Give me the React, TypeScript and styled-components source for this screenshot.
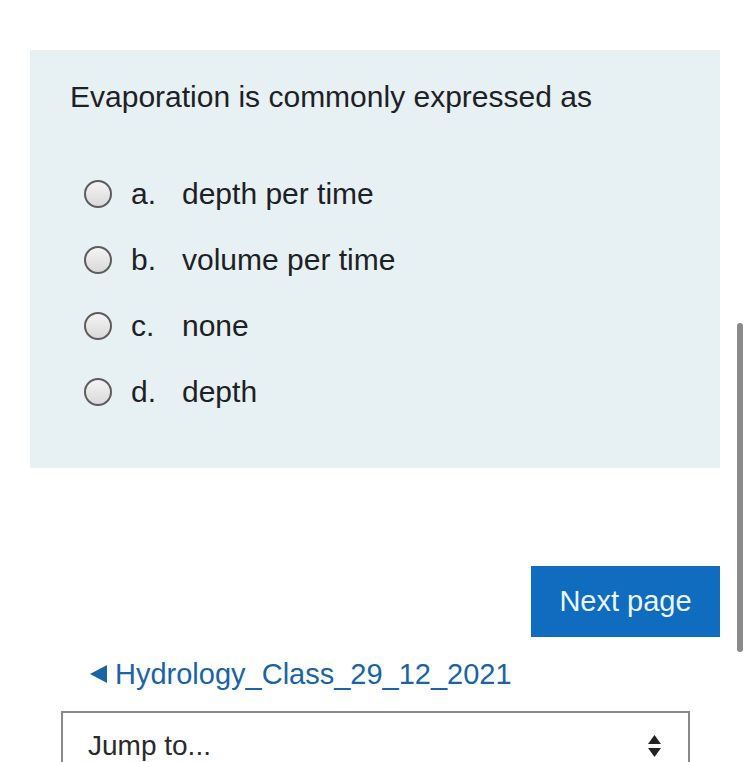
import styled, { createGlobalStyle } from "styled-components";

const GlobalStyle = createGlobalStyle`
  html, body {
    margin: 0;
    padding: 0;
    background: #fff;
    font-family: "Liberation Sans", Arial, sans-serif;
    color: #1d2125;
  }
`;

const Page = styled.div`
  position: relative;
  width: 750px;
  height: 762px;
  overflow: hidden;
  padding: 50px 0 0 30px;
  box-sizing: border-box;
`;

const QuestionPanel = styled.div`
  width: 690px;
  height: 418px;
  box-sizing: border-box;
  background: #e7f1f4;
  padding: 28px 40px 0 40px;
`;

const QuestionText = styled.div`
  font-size: 30px;
  line-height: 38px;
  color: #1d2125;
`;

const Answers = styled.div`
  display: flex;
  flex-direction: column;
  gap: 28px;
  margin-top: 59px;
  padding-left: 14px;
`;

const AnswerRow = styled.label`
  display: flex;
  align-items: center;
  height: 38px;
  font-size: 30px;
  color: #1d2125;
`;

const Radio = styled.span`
  width: 28px;
  height: 28px;
  border-radius: 50%;
  box-sizing: border-box;
  border: 2px solid #5c5c5c;
  background: linear-gradient(#f4f4f4, #d9d9d9);
  flex-shrink: 0;
`;

const Letter = styled.span`
  width: 51px;
  margin-left: 19px;
`;

const Footer = styled.div`
  display: flex;
  flex-direction: column;
  width: 690px;
`;

const NextButton = styled.button`
  align-self: flex-end;
  margin-top: 98px;
  width: 189px;
  height: 71px;
  border: none;
  background: #0f6cbf;
  color: #eaf6ff;
  font-family: inherit;
  font-size: 29px;
`;

const PrevLink = styled.a`
  display: flex;
  align-items: center;
  gap: 8px;
  margin: 21px 0 0 60px;
  font-size: 29px;
  line-height: 32px;
  color: #1a64a6;
  text-decoration: none;
`;

const Triangle = styled.span`
  width: 0;
  height: 0;
  border-top: 9px solid transparent;
  border-bottom: 9px solid transparent;
  border-right: 17px solid #1a64a6;
`;

const JumpSelect = styled.div`
  display: flex;
  align-items: center;
  justify-content: space-between;
  margin: 21px 0 0 31px;
  width: 629px;
  height: 72px;
  box-sizing: border-box;
  border: 2px solid #8a8a8a;
  border-bottom: none;
  padding: 0 26px 4px 25px;
  font-size: 28px;
  line-height: 30px;
  color: #2a2a2a;
`;

const Arrows = styled.svg`
  width: 15px;
  height: 24px;
`;

const Scrollbar = styled.div`
  position: absolute;
  left: 737px;
  top: 323px;
  width: 6px;
  height: 329px;
  border-radius: 3px;
  background: #8a8a8a;
`;

const answers = [
  { letter: "a.", text: "depth per time" },
  { letter: "b.", text: "volume per time" },
  { letter: "c.", text: "none" },
  { letter: "d.", text: "depth" },
];

export default function App() {
  return (
    <>
      <GlobalStyle />
      <Page>
        <QuestionPanel>
          <QuestionText>Evaporation is commonly expressed as</QuestionText>
          <Answers>
            {answers.map((a) => (
              <AnswerRow key={a.letter}>
                <Radio />
                <Letter>{a.letter}</Letter>
                <span>{a.text}</span>
              </AnswerRow>
            ))}
          </Answers>
        </QuestionPanel>
        <Footer>
          <NextButton>Next page</NextButton>
          <PrevLink href="#">
            <Triangle />
            Hydrology_Class_29_12_2021
          </PrevLink>
          <JumpSelect>
            <span>Jump to...</span>
            <Arrows viewBox="0 0 15 24">
              <path d="M7.5 1 L14 10 H1 Z" fill="#222" />
              <path d="M7.5 23 L14 14 H1 Z" fill="#222" />
            </Arrows>
          </JumpSelect>
        </Footer>
        <Scrollbar />
      </Page>
    </>
  );
}
